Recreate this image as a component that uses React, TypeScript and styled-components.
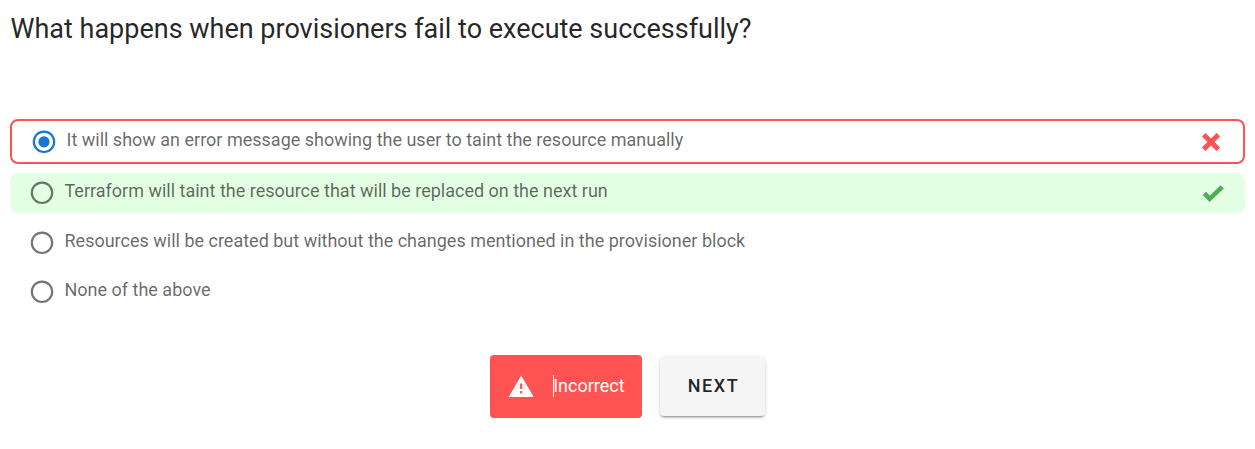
import React from "react";
import styled, { createGlobalStyle } from "styled-components";

const Global = createGlobalStyle`
  * { box-sizing: border-box; }
  body { margin: 0; background: #fff; font-family: Roboto, sans-serif; overflow: hidden; }
`;
const Page = styled.main`
  height: 449px;
  padding: 10px 10px 0;
`;
const Title = styled.h1`
  margin: 0 0 70px;
  padding-left: 0.5px;
  font-size: 27px;
  font-weight: 400;
  line-height: 39px;
  color: rgba(0, 0, 0, 0.87);
`;
const Options = styled.div`
  display: flex;
  flex-direction: column;
  gap: 9px;
`;
const Option = styled.label<{ $state?: "wrong" | "right" }>`
  display: flex;
  align-items: center;
  height: ${(p) => (p.$state === "wrong" ? 45 : 40)}px;
  padding: 0 20px;
  border-radius: 8px;
  border: ${(p) => (p.$state === "wrong" ? "2px solid #ff5252" : "0")};
  background: ${(p) => (p.$state === "right" ? "#e3ffe4" : "#fff")};

  &:nth-child(3) {
    margin-top: 1px;
  }
`;
const RadioIcon = styled.svg<{ $on?: boolean }>`
  flex: none;
  width: 24px;
  height: 24px;
  color: ${(p) => (p.$on ? "#1976d2" : "rgba(0, 0, 0, 0.54)")};
`;
const MarkIcon = styled.svg`
  flex: none;
  width: 24px;
  height: 24px;
`;
const Label = styled.span`
  flex: 1;
  padding: 0 0 4px 10.5px;
  font-size: 18px;
  line-height: 24px;
  color: rgba(0, 0, 0, 0.6);
`;
const Actions = styled.div`
  display: flex;
  align-items: center;
  justify-content: center;
  gap: 18px;
  margin-top: 43px;
`;
const Alert = styled.div`
  display: flex;
  align-items: center;
  width: 152px;
  height: 63px;
  padding: 0 0 2px 18px;
  border-radius: 4px;
  background: #ff5252;
  color: #fff;
  font-size: 18px;
`;
const Caret = styled.span`
  width: 1px;
  height: 22px;
  margin: 1px -0.6px 0 19px;
  background: #fff;
`;
const Next = styled.button`
  width: 105.5px;
  height: 59px;
  padding: 0 0 2px 2px;
  border: 0;
  border-radius: 4px;
  background: #f5f5f5;
  color: rgba(0, 0, 0, 0.87);
  font: 500 18px Roboto, sans-serif;
  letter-spacing: 1.6px;
  box-shadow: 0 3px 1px -2px rgba(0,0,0,.2), 0 2px 2px rgba(0,0,0,.14), 0 1px 5px rgba(0,0,0,.12);
`;

function Radio({ on }: { on?: boolean }) {
  return (
    <RadioIcon $on={on} viewBox="0 0 24 24">
      <circle cx="12" cy="11.8" r="10.2" fill="none" stroke="currentColor" strokeWidth="2.2" />
      {on && <circle cx="12" cy="11.8" r="5.6" fill="currentColor" />}
    </RadioIcon>
  );
}

export default function App() {
  return (
    <Page>
      <Global />
      <Title>What happens when provisioners fail to execute successfully?</Title>
      <Options>
        <Option $state="wrong">
          <Radio on />
          <Label>It will show an error message showing the user to taint the resource manually</Label>
          <MarkIcon viewBox="0 0 24 24"><path d="M4.7 4.7l14.6 14.6m0-14.6L4.7 19.3" stroke="#ff5252" strokeWidth="4.9" /></MarkIcon>
        </Option>
        <Option $state="right">
          <Radio />
          <Label>Terraform will taint the resource that will be replaced on the next run</Label>
          <MarkIcon viewBox="0 0 24 24"><path d="M3.4 12.4l5.3 5.4L21.2 5.8" fill="none" stroke="#4caf50" strokeWidth="4.6" /></MarkIcon>
        </Option>
        <Option>
          <Radio />
          <Label>Resources will be created but without the changes mentioned in the provisioner block</Label>
        </Option>
        <Option>
          <Radio />
          <Label>None of the above</Label>
        </Option>
      </Options>
      <Actions>
        <Alert>
          <svg width="26" height="22" viewBox="0 0 26 22"><path fill="#fff" fillRule="evenodd" d="M13.2 0.5L25.7 22H0.7zM12.1 8.5v5.5h2.2V8.5zm0 7.5v2.5h2.2V16z" /></svg>
          <Caret />
          Incorrect
        </Alert>
        <Next>NEXT</Next>
      </Actions>
    </Page>
  );
}
